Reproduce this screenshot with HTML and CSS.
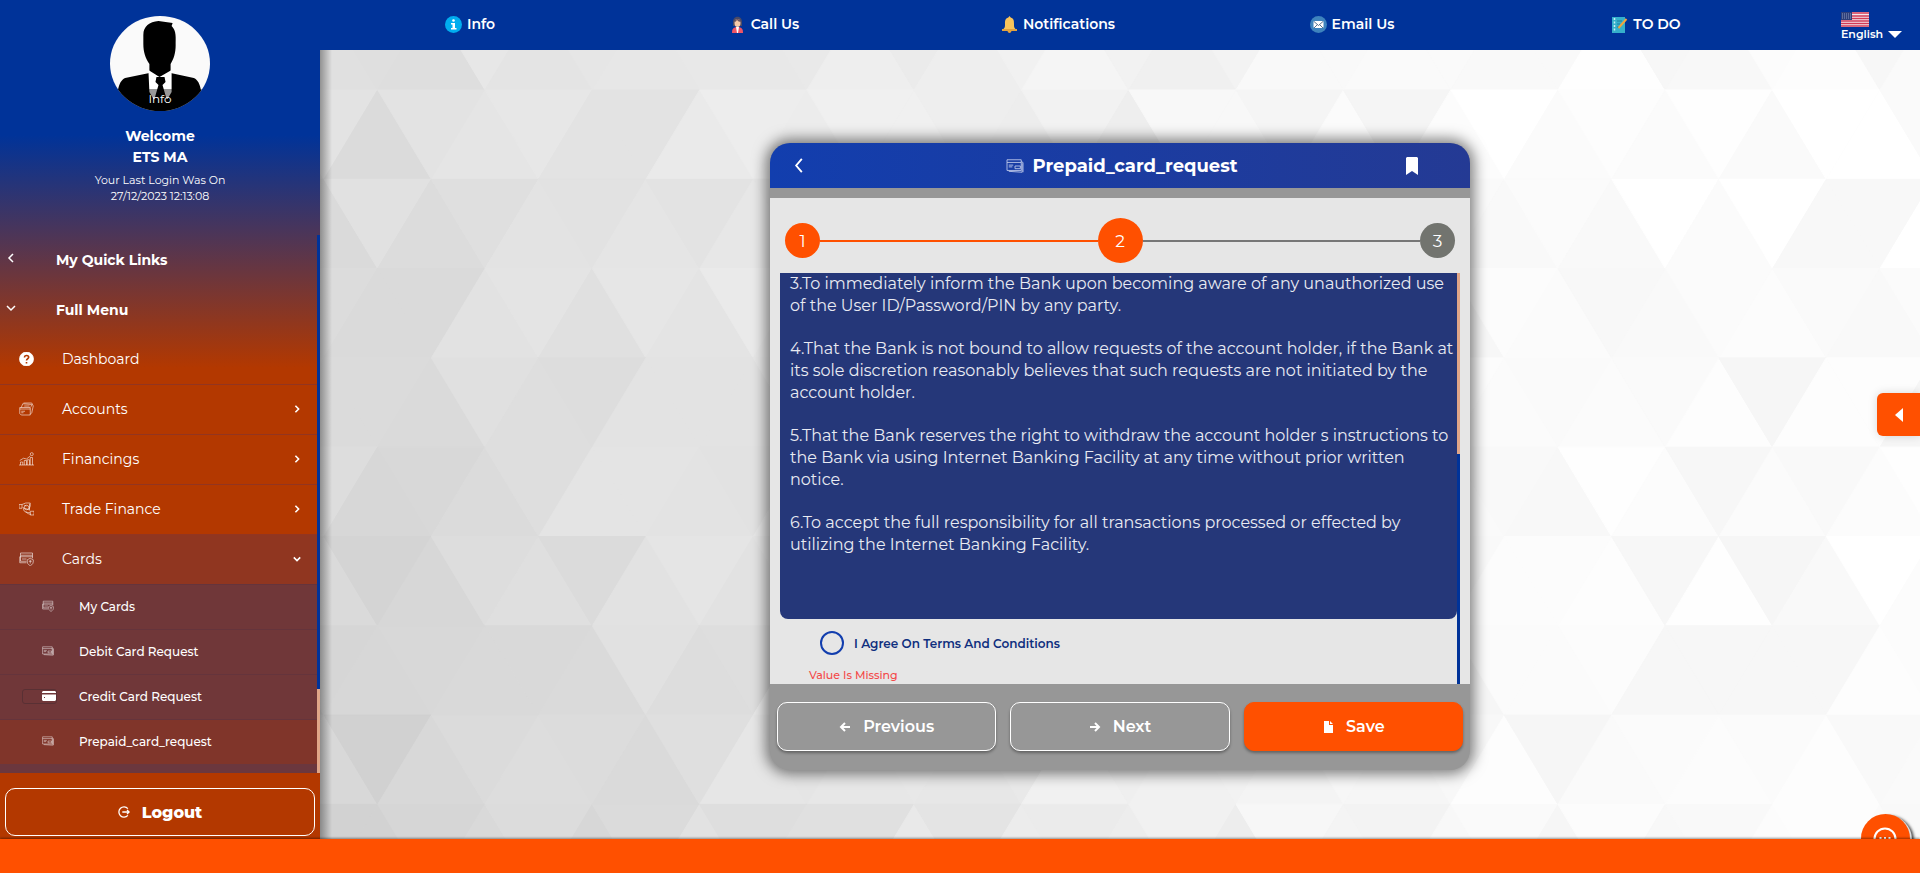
FILE: index.html
```html
<!DOCTYPE html>
<html lang="en">
<head>
<meta charset="utf-8">
<title>Prepaid card request</title>
<link rel="stylesheet" href="styles.css">
</head>
<body>
<svg class="defs" aria-hidden="true">
  <symbol id="cards" viewBox="0 0 20 18"><path d="M2 1h16v3H2zM1 6h17M2 4v8h8M18 4v4M1 6v8h9M4 9h6M11 10l4-2 4 2v3c0 3-4 5-4 5s-4-2-4-5zM15 10v5M13 12h4"/></symbol>
  <symbol id="card" viewBox="0 0 20 18"><path d="M1 2h16v12H1zM1 5h16M3 15l15 1V6M10 9h6v3h-6zM3 8h5M3 10h4M17 4l2 1v11"/></symbol>
  <symbol id="right" viewBox="0 0 10 10"><path d="M3 1l4 4-4 4"/></symbol>
</svg>
<div class="page">
  <aside class="sidebar">
    <div class="profile">
      <button class="avatar" type="button">
        <svg viewBox="0 0 99 95" preserveAspectRatio="none" aria-hidden="true">
          <rect width="99" height="95" fill="#fafafa"/>
          <path fill="#000" d="M33 19c0-9 6-13 15-14l14 2-1 3c5 5 4 12 4 19 0 8-2 14-5 19v9l23 5c6 3 8 10 9 33H6c1-23 3-30 9-33l24-5v-9c-4-6-6-12-6-20z"/>
          <path fill="#fff" d="M38 54l1 22 4 7h14l4-7V54l-12 7z"/>
          <path fill="#000" d="M46 61h8l1 5-3 3 4 14H44l4-14-3-3z"/>
        </svg>
        <span>Info</span>
      </button>
      <p class="who">Welcome<br>ETS MA</p>
      <p class="last">Your Last Login Was On<br>27/12/2023 12:13:08</p>
    </div>
    <div class="scroller">
      <nav class="menu">
        <button class="group" type="button"><svg class="chev" viewBox="0 0 10 10"><path d="M7 1L3 5l4 4"/></svg>My Quick Links</button>
        <button class="group" type="button"><svg class="chev" viewBox="0 0 10 10"><path d="M1 3l4 4 4-4"/></svg>Full Menu</button>
        <a class="item first" href="#"><svg class="ico solid" viewBox="0 0 14 14"><circle cx="7" cy="7" r="7" fill="#fff"/><path d="M5 5.4c0-2.6 4.2-2.4 4.2-.1C9.200 6.800 7 6.700 7 8.500M7 9.900v1.600" stroke="#b33800" stroke-width="1.600"/></svg><span>Dashboard</span></a>
        <a class="item" href="#"><svg class="ico" viewBox="0 0 20 18"><path d="M1 7h14v10H3l-2-2zM1 9h14M3 7l2-5 12 1-1 3M6 1h11l2 4-2 9-2 2M3 12h5M3 14h3M7 5l7 0"/></svg><span>Accounts</span><svg class="more"><use href="#right"/></svg></a>
        <a class="item" href="#"><svg class="ico" viewBox="0 0 20 18"><path d="M0 17h20M2 17v-4h3v4M7 17v-6h3v6M11 17v-7h3v7M15 17V7h3v10M1 11l5-3 4 1 5-4"/><circle cx="17" cy="2.500" r="2"/></svg><span>Financings</span><svg class="more"><use href="#right"/></svg></a>
        <a class="item" href="#"><svg class="ico" viewBox="0 0 20 18"><path d="M0 3h4v5H0zM4 3l5-2h6v4l-2 5-8-3M7 4l3 1M6 8c0 7 6 5 9 6M9 12c1 3 5 4 7 4M15 12h5v5h-5zM14 2v9"/><circle cx="10" cy="7" r="3"/></svg><span>Trade Finance</span><svg class="more"><use href="#right"/></svg></a>
        <a class="item open" href="#"><svg class="ico"><use href="#cards"/></svg><span>Cards</span><svg class="more" viewBox="0 0 10 10"><path d="M1 3l4 4 4-4"/></svg></a>
        <a class="sub" href="#"><svg class="ico"><use href="#cards"/></svg><span>My Cards</span></a>
        <a class="sub" href="#"><svg class="ico"><use href="#card"/></svg><span>Debit Card Request</span></a>
        <a class="sub framed" href="#"><span class="frame"><svg viewBox="0 0 14 10"><path fill="#fff" d="M1 0h12l1 1v1H0V1zM0 3.500h14V9l-1 1H1L0 9z"/><path fill="#703739" d="M2 6h1v1H2z"/></svg></span><span>Credit Card Request</span></a>
        <a class="sub current" href="#"><svg class="ico"><use href="#card"/></svg><span>Prepaid_card_request</span></a>
      </nav>
      <div class="track"><i></i></div>
    </div>
    <div class="exit">
      <button class="logout" type="button"><svg viewBox="0 0 14 14"><path d="M11.500 3a6 6 0 1 0 0 8M5 7h8M10.500 4.500L13 7l-2.500 2.500"/></svg>Logout</button>
    </div>
  </aside>
  <header class="topbar">
    <a href="#"><svg viewBox="0 0 17 17"><circle cx="8.500" cy="8.500" r="8.500" fill="#00adef"/><circle cx="8.500" cy="4.500" r="1.300" fill="#fff"/><path fill="#fff" d="M6 7h4v5h1.500v1.500H6V12h1.500V8.500H6z"/></svg>Info</a>
    <a href="#"><svg viewBox="0 0 17 17"><path fill="#ee5566" d="M3 17c0-4 1-5 4-6h3c3 1 4 2 4 6z"/><path fill="#fff" d="M7 11h3l-1 6H8z"/><path fill="#4a4a66" d="M4 6c0-7 9-7 9 0v4H4z"/><ellipse cx="8.500" cy="7" rx="3" ry="4" fill="#f8c9a8"/><path fill="#6c5460" d="M5 6c1-4 6-4 7 0-2 0-3-1-4-2-1 1-1 2-3 2z"/></svg>Call Us</a>
    <a href="#"><svg viewBox="0 0 17 17"><path fill="#f9c45b" d="M8.500 0l1.200 1.500C13 2.500 13 5 13 8c0 3 0 4 3 6H1c3-2 3-3 3-6 0-3 0-5.500 3.300-6.500z"/><path fill="#e3a23e" d="M1 13h15v2H1zM6.500 15h4c-.5 2.500-3.500 2.500-4 0z"/></svg>Notifications</a>
    <a href="#"><svg viewBox="0 0 17 17"><circle cx="8.500" cy="8.500" r="8.500" fill="#3e83bd"/><rect x="3.500" y="5" width="10" height="7" rx="1" fill="#fff"/><path d="M4 5.500l4.500 4 4.500-4M4 12l3.500-3.500M13 12L9.500 8.500" fill="none" stroke="#59718e"/></svg>Email Us</a>
    <a href="#"><svg viewBox="0 0 17 17"><rect x="1" y="1" width="13" height="16" fill="#35b0cb"/><path d="M3.500 2v14" stroke="#c5eef5" stroke-width="1.500" stroke-dasharray="2 1.500"/><path d="M6 5h5M6 8h3M6 11h3" stroke="#217f9c"/><path d="M7.500 12l8-9" stroke="#f5a33b" stroke-width="2"/></svg>TO DO</a>
    <button class="lang" type="button">
      <svg class="flag" viewBox="0 0 28 15" preserveAspectRatio="none"><rect width="28" height="15" fill="#f3e8ec"/><path d="M0 1h28M0 4h28M0 6.500h28M0 9h28M0 11.500h28M0 14h28" stroke="#d13a55" stroke-width="1.300"/><rect width="11" height="8" fill="#2d3e79"/><path d="M1 2h10M1 4h10M1 6h10" stroke="#8c9bc0" stroke-dasharray="1 1"/></svg>
      <span>English <i></i></span>
    </button>
  </header>
  <main class="stage">
    <svg class="facets" viewBox="0 0 1600 789" preserveAspectRatio="xMidYMid slice" aria-hidden="true"></svg>
    <section class="card">
      <header class="title">
        <button type="button" aria-label="Back"><svg viewBox="0 0 10 16"><path d="M8 1L2 8l6 7"/></svg></button>
        <h1><svg><use href="#card"/></svg>Prepaid_card_request</h1>
        <button class="save-mark" type="button" aria-label="Bookmark"><svg class="mark" viewBox="0 0 12 18"><path d="M1 0h10l1 1v17l-6-4-6 4V1z"/></svg></button>
      </header>
      <div class="content">
        <div class="steps"><b>1</b><hr class="done"><b class="active">2</b><hr><b class="todo">3</b></div>
        <div class="view">
          <div class="form">
            <div class="terms">
              <p>3.To immediately inform the Bank upon becoming aware of any unauthorized use<br>of the User ID/Password/PIN by any party.</p>
              <p>4.That the Bank is not bound to allow requests of the account holder, if the Bank at<br>its sole discretion reasonably believes that such requests are not initiated by the<br>account holder.</p>
              <p>5.That the Bank reserves the right to withdraw the account holder s instructions to<br>the Bank via using Internet Banking Facility at any time without prior written<br>notice.</p>
              <p>6.To accept the full responsibility for all transactions processed or effected by<br>utilizing the Internet Banking Facility.</p>
            </div>
            <label class="agree"><input type="radio" name="agree">I Agree On Terms And Conditions</label>
            <p class="error">Value Is Missing</p>
          </div>
          <div class="track upper"><i></i></div>
        </div>
      </div>
      <footer class="actions">
        <button type="button"><svg viewBox="0 0 12 12"><path d="M11 6H2M6 2L2 6l4 4"/></svg>Previous</button>
        <button type="button"><svg viewBox="0 0 12 12"><path d="M1 6h9M6 2l4 4-4 4"/></svg>Next</button>
        <button class="save" type="button"><svg viewBox="0 0 12 12"><path class="fill" d="M2 0h5v4h4v8H2zM8 0l3 3H8z"/></svg>Save</button>
      </footer>
    </section>
    <button class="drawer" type="button" aria-label="Open panel"><i></i></button>
    <button class="chat" type="button" aria-label="Chat"><svg viewBox="0 0 24 24"><circle cx="12" cy="12" r="10.500"/><path d="M6.500 11h2M11 11h2M15.500 11h2"/></svg></button>
  </main>
  <footer class="bottom"></footer>
</div>
<script src="facets.js"></script>
</body>
</html>
```
FILE: styles.css
```css
* { box-sizing: border-box; }
body { margin: 0; font-family: Montserrat, Inter, sans-serif; color: #fff; }
p, h1 { margin: 0; }
a { color: inherit; text-decoration: none; }
button { font: inherit; color: inherit; background: none; border: 0; padding: 0; }
svg { fill: none; stroke-width: 1; }
.defs { position: absolute; width: 0; height: 0; }
.page { height: 100vh; display: grid; grid-template: 50px 1fr 34px / 320px 1fr; overflow: hidden; }

.sidebar { grid-row: 1 / 3; display: flex; flex-direction: column; min-height: 0; z-index: 2;
  background: linear-gradient(#039 0, #039 135px, #b33800 368px); }
.profile { height: 235px; padding-top: 16px; display: flex; flex-direction: column; align-items: center; text-align: center; flex: none; }
.avatar { position: relative; width: 100px; height: 95px; border-radius: 50%; overflow: hidden; }
.avatar svg { display: block; width: 100%; height: 100%; }
.avatar span { position: absolute; inset: 73px 0 0; background: rgba(0,0,0,.4); font-size: 12px; line-height: 20px; }
.who { margin-top: 15px; font-size: 14px; font-weight: 700; line-height: 21px; }
.last { margin-top: 4px; font-size: 11px; line-height: 16px; }
.scroller { flex: 1; min-height: 0; display: flex; overflow: hidden; }
.menu { flex: 1; }
.track { width: 3px; flex: none; background: #039; display: flex; flex-direction: column; justify-content: flex-end; }
.track i { height: 84px; background: #e0a688; }
.group { display: flex; align-items: center; width: 100%; height: 50px; padding-left: 6px; font-size: 14px; font-weight: 700; }
.group .chev { width: 10px; height: 10px; margin: 0 40px 4px 0; stroke: #fff; stroke-width: 1.5; }
.item { display: flex; align-items: center; height: 50px; padding: 0 16px 2px 19px; font-size: 14px; border-top: 1px solid #933520; }
.item.first { height: 49px; border: 0; }
.item .ico { width: 15px; height: 14px; margin-right: 28px; }
.ico { stroke: rgba(255,255,255,.75); }
.more { width: 8px; height: 8px; margin-left: auto; stroke: #fff; stroke-width: 2; }
.open { background: #903620; }
.sub { display: flex; align-items: center; height: 45px; padding: 0 0 2px 42px; font-size: 12px; font-weight: 500; background: #703739; border-top: 1px solid #65343c; }
.sub .ico { width: 12px; height: 12px; margin-right: 25px; }
.sub.framed { padding-left: 22px; }
.frame { display: flex; justify-content: flex-end; align-items: center; width: 35px; height: 15px; margin-right: 22px; border: 1px solid #593034; border-radius: 3px; }
.frame svg { width: 14px; height: 10px; }
.sub.current { background: #80352a; }
.menu::after { content: ""; display: block; height: 20px; background: #6b373e; }
.exit { background: #b33800; padding: 15px 5px 3px; }
.logout { display: flex; align-items: center; justify-content: center; gap: 12px; width: 100%; height: 48px; border: 1px solid #fff; border-radius: 10px; font-size: 16px; font-weight: 800; }
.logout svg { width: 12px; height: 12px; stroke: #fff; stroke-width: 1.5; }

.topbar { display: flex; background: #039; z-index: 1; padding-left: 3px; }
.topbar a { flex: 1; display: flex; align-items: center; justify-content: center; gap: 5px; height: 48px; font-size: 14px; font-weight: 600; }
.topbar a svg { width: 17px; height: 17px; }
.lang { width: 127px; padding: 12px 0 0 48px; text-align: left; font-size: 11px; line-height: 14px; font-weight: 600; display: flex; flex-direction: column; }
.flag { width: 28px; height: 15px; }
.lang span { display: flex; align-items: center; gap: 5px; }
.lang i { border: 7px solid transparent; border-top-color: #fff; border-bottom: 0; }

.stage { position: relative; display: flex; justify-content: center; align-items: center; overflow: hidden; background: #e9e9e9; min-height: 0; padding-top: 24px; }
.stage::before { content: ""; position: absolute; z-index: 1; inset: 0 auto 0 0; width: 12px; background: linear-gradient(90deg, rgba(0,0,0,.35), transparent); }
.facets { position: absolute; inset: 0; width: 100%; height: 100%; }
.card { position: relative; width: 700px; border-radius: 20px; overflow: hidden; background: #979797; box-shadow: 0 0 14px 4px rgba(0,0,0,.5); }
.title { display: grid; grid-template-columns: 1fr auto 1fr; align-items: center; height: 45px; padding-left: 4px; background: linear-gradient(90deg, #123eae, #243a94); }
.title h1 { display: flex; align-items: center; gap: 8px; font-size: 18px; font-weight: 700; }
.title h1 svg { width: 18px; height: 16px; stroke: #bcc8ea; }
.title button { justify-self: start; margin-left: 20px; }
.title .save-mark { justify-self: end; margin-right: 52px; }
.title button svg { display: block; width: 10px; height: 15px; stroke: #fff; stroke-width: 2; }
.title .mark { width: 12px; height: 18px; fill: #fff; stroke: none; }
.content { margin-top: 10px; padding: 20px 10px 0; background: #e6e6e6; }
.steps { display: flex; align-items: center; height: 45px; padding: 0 5px; margin-bottom: 10px; }
.steps b { display: grid; place-items: center; width: 35px; height: 35px; border-radius: 50%; background: #ff5000; font-size: 17px; font-weight: 400; }
.steps .active { width: 45px; height: 45px; }
.steps .todo { background: #72746f; }
.steps hr { flex: 1; margin: 0; border: 0; height: 2px; background: #777; }
.steps .done { background: #ff5000; }
.view { display: flex; }
.form { flex: 1; min-width: 0; height: 411px; }
.terms { height: 346px; padding-left: 10px; background: #253779; border-radius: 0 0 8px 8px; font-size: 16px; line-height: 22px; color: #e8eaf2; white-space: nowrap; }
.terms p { margin-bottom: 21px; }
.agree { display: flex; align-items: center; gap: 10px; height: 48px; padding-left: 40px; font-size: 12px; font-weight: 600; color: #0f2f7e; }
.agree input { appearance: none; width: 24px; height: 24px; margin: 0; border: 2px solid #123eae; border-radius: 50%; }
.error { padding-left: 29px; font-size: 11px; font-weight: 500; line-height: 16px; color: #f44949; }
.upper { justify-content: flex-start; }
.upper i { height: 181px; }
.actions { display: grid; grid-template-columns: repeat(3, 1fr); gap: 14px; padding: 18px 7px 19px; }
.actions button { display: flex; align-items: center; justify-content: center; gap: 12px; height: 49px; border: 1px solid #fff; border-radius: 10px; font-size: 16px; font-weight: 600; box-shadow: 0 2px 3px rgba(0,0,0,.35); }
.actions svg { width: 12px; height: 12px; stroke: #fff; stroke-width: 2; }
.actions .fill { fill: #fff; stroke: none; }
.actions .save { background: #ff5000; border-color: #ff5000; }
.drawer { position: absolute; right: 0; top: 343px; width: 43px; height: 43px; background: #ff5000; border-radius: 6px 0 0 6px; box-shadow: 0 0 10px rgba(0,0,0,.15); display: grid; place-items: center; }
.drawer i { border: 7px solid transparent; border-right: 8px solid #fff; border-left: 0; }
.chat { position: absolute; right: 10px; bottom: -24px; width: 49px; height: 49px; border-radius: 50%; background: #ff5000; box-shadow: 2px 1px 0 #ddd, 4px 2px 3px #444; padding: 10px 12px; }
.chat svg { display: block; width: 24px; height: 24px; stroke: #fff; stroke-width: 2; }
.bottom { grid-column: 1 / 3; background: #ff5000; z-index: 3; box-shadow: 0 -1px 2px rgba(0,0,0,.4); }
```
FILE: facets.js
```js
const svg = document.querySelector('.facets');
const side = 107.3, tall = 89.3, top0 = 40, left0 = 165;
let seed = 11;
const random = () => (seed = (seed * 16807) % 2147483647) / 2147483647;
let shapes = '';
for (let r = -1; r < 9; r++) {
  const y = top0 + r * tall;
  const upper = left0 + (r % 2 ? side / 2 : 0) - 3 * side;
  for (let i = 0; i < 36; i++) {
    const x = upper + i * side / 2;
    const up = i % 2;
    const points = up
      ? `${x},${y + tall} ${x + side / 2},${y} ${x + side},${y + tall}`
      : `${x},${y} ${x + side},${y} ${x + side / 2},${y + tall}`;
    const h = Math.min(1, Math.max(0, x / 1100));
    const v = y / 789;
    const base = 224 - 14 * v + h * (27 + 13 * v);
    const tone = Math.min(255, Math.round(base + (random() - 0.5) * 9));
    const fill = `rgb(${tone},${tone},${tone})`;
    shapes += `<polygon points="${points}" fill="${fill}" stroke="${fill}"/>`;
  }
}
svg.innerHTML = shapes;
```
